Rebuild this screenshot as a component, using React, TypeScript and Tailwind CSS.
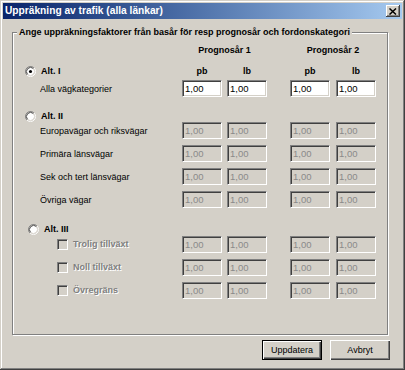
import React from "react";

function Radio({ checked }: { checked?: boolean }) {
  return (
    <svg width="11" height="11" viewBox="0 0 12 12" className="shrink-0">
      <circle cx="6" cy="6" r="4.5" fill="#ffffff" />
      <path d="M2.11 9.89 A5.5 5.5 0 0 1 9.89 2.11" fill="none" stroke="#808080" strokeWidth="1" />
      <path d="M9.89 2.11 A5.5 5.5 0 0 1 2.11 9.89" fill="none" stroke="#ffffff" strokeWidth="1" />
      <path d="M2.82 9.18 A4.5 4.5 0 0 1 9.18 2.82" fill="none" stroke="#404040" strokeWidth="1" />
      <path d="M9.18 2.82 A4.5 4.5 0 0 1 2.82 9.18" fill="none" stroke="#D4D0C8" strokeWidth="1" />
      {checked && <circle cx="6" cy="6" r="1.7" fill="#000000" />}
    </svg>
  );
}

function Check() {
  return (
    <div className="w-[11px] h-[11px] shrink-0 bg-[#D4D0C8] border border-t-[#808080] border-l-[#808080] border-r-white border-b-white shadow-[inset_1px_1px_0_#404040,inset_-1px_-1px_0_#D4D0C8]" />
  );
}

function Field({ disabled }: { disabled?: boolean }) {
  return (
    <div
      className={
        disabled
          ? "w-[40px] h-[17px] border border-t-[#808080] border-l-[#808080] border-r-white border-b-white shadow-[inset_1px_1px_0_#404040,inset_-1px_-1px_0_#D4D0C8] flex items-center pl-[2px] text-[9.5px] bg-[#D4D0C8] text-[#8a8a8a]"
          : "w-[40px] h-[17px] border border-t-[#808080] border-l-[#808080] border-r-white border-b-white shadow-[inset_1px_1px_0_#404040,inset_-1px_-1px_0_#D4D0C8] flex items-center pl-[2px] text-[9.5px] bg-white text-black"
      }
    >
      1,00
    </div>
  );
}

function Fields({ disabled }: { disabled?: boolean }) {
  return (
    <div className="flex">
      <div className="flex gap-[5px]">
        <Field disabled={disabled} />
        <Field disabled={disabled} />
      </div>
      <div className="flex gap-[6px] ml-[23px]">
        <Field disabled={disabled} />
        <Field disabled={disabled} />
      </div>
    </div>
  );
}

function Row({ label, disabled, mt }: { label: string; disabled?: boolean; mt: string }) {
  return (
    <div className={`flex items-center h-[17px] ${mt}`}>
      <div className="w-[169px] pl-[27px] pt-[2px]">{label}</div>
      <Fields disabled={disabled} />
    </div>
  );
}

function CheckRow({ label, mt }: { label: string; mt: string }) {
  return (
    <div className={`flex items-center h-[17px] ${mt}`}>
      <div className="w-[169px] pl-[44px] flex items-center gap-[5px]">
        <Check />
        <span className="font-bold text-[#808080] [text-shadow:1px_1px_0_#ffffff]">{label}</span>
      </div>
      <Fields disabled />
    </div>
  );
}

export default function App() {
  return (
    <div className="w-[405px] h-[370px] bg-[#D4D0C8] p-[3px] flex flex-col font-['Liberation_Sans',Arial,sans-serif] text-[9px] leading-[11px] text-black shadow-[inset_-1px_-1px_0_#404040,inset_1px_1px_0_#D4D0C8,inset_-2px_-2px_0_#808080,inset_2px_2px_0_#ffffff]">
      <div className="h-[16px] flex items-center justify-between bg-gradient-to-r from-[#0A246A] to-[#A6CAF0] pl-[2px] pr-[2px]">
        <span className="text-white font-bold text-[10.2px] leading-[12px]">Uppräkning av trafik (alla länkar)</span>
        <div className="w-[14px] h-[12px] bg-[#D4D0C8] flex items-center justify-center shadow-[inset_-1px_-1px_0_#404040,inset_1px_1px_0_#ffffff,inset_-2px_-2px_0_#808080]">
          <svg width="8" height="7" viewBox="0 0 8 7">
            <path d="M0.5 0.5 L7 6.5 M7 0.5 L0.5 6.5" stroke="#000" strokeWidth="1.5" />
          </svg>
        </div>
      </div>

      <div className="flex flex-col pl-[9px]">
        <div className="relative mt-[13px] w-[376px] h-[303px] border border-[#808080] shadow-[1px_1px_0_#ffffff,inset_1px_1px_0_#ffffff] flex flex-col">
          <span className="absolute left-[4px] top-[-7px] px-[2px] bg-[#D4D0C8] font-bold leading-[12px]">
            Ange uppräkningsfaktorer från basår för resp prognosår och fordonskategori
          </span>

          <div className="flex h-[12px] mt-[11px] font-bold items-center">
            <div className="w-[169px]" />
            <div className="w-[85px] text-center">Prognosår 1</div>
            <div className="w-[86px] ml-[23px] text-center">Prognosår 2</div>
          </div>

          <div className="flex h-[12px] mt-[9px] font-bold items-center">
            <div className="w-[169px] pl-[12px] flex items-center gap-[5px]">
              <Radio checked />
              <span>Alt. I</span>
            </div>
            <div className="flex">
              <div className="flex gap-[5px]">
                <div className="w-[40px] text-center">pb</div>
                <div className="w-[40px] text-center">lb</div>
              </div>
              <div className="flex gap-[6px] ml-[23px]">
                <div className="w-[40px] text-center">pb</div>
                <div className="w-[40px] text-center">lb</div>
              </div>
            </div>
          </div>

          <Row label="Alla vägkategorier" mt="mt-[3px]" />

          <div className="flex h-[12px] mt-[13px] font-bold items-center pl-[12px] gap-[5px]">
            <Radio />
            <span>Alt. II</span>
          </div>

          <Row label="Europavägar och riksvägar" disabled mt="mt-[0px]" />
          <Row label="Primära länsvägar" disabled mt="mt-[6px]" />
          <Row label="Sek och tert länsvägar" disabled mt="mt-[6px]" />
          <Row label="Övriga vägar" disabled mt="mt-[6px]" />

          <div className="flex h-[12px] mt-[15px] font-bold items-center pl-[15px] gap-[5px]">
            <Radio />
            <span>Alt. III</span>
          </div>

          <CheckRow label="Trolig tillväxt" mt="mt-[1px]" />
          <CheckRow label="Noll tillväxt" mt="mt-[6px]" />
          <CheckRow label="Övregräns" mt="mt-[6px]" />
        </div>

        <div className="flex justify-end gap-[8px] mt-[5px] pr-[2px] w-[380px]">
          <button className="w-[60px] h-[20px] border border-black bg-[#D4D0C8] shadow-[inset_1px_1px_0_#ffffff,inset_-1px_-1px_0_#404040,inset_-2px_-2px_0_#808080] text-black">
            Uppdatera
          </button>
          <button className="w-[60px] h-[20px] bg-[#D4D0C8] shadow-[inset_1px_1px_0_#ffffff,inset_-1px_-1px_0_#404040,inset_-2px_-2px_0_#808080] text-black">
            Avbryt
          </button>
        </div>
      </div>
    </div>
  );
}
